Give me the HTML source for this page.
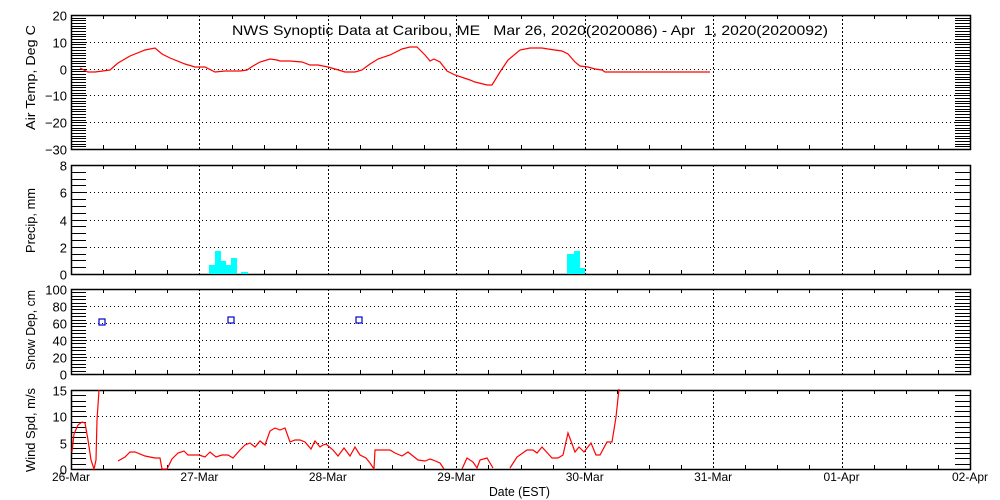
<!DOCTYPE html>
<html><head><meta charset="utf-8"><style>
html,body{margin:0;padding:0;background:#fff;}
svg{display:block;font-family:"Liberation Sans",sans-serif;}
text{font-size:12px;fill:#000;white-space:pre;}
</style></head><body>
<svg id="s" width="1000" height="500" viewBox="0 0 1000 500" xmlns="http://www.w3.org/2000/svg" xml:space="preserve">
<rect width="1000" height="500" fill="#fff"/>
<g id="g"></g>
<text x="232" y="35" textLength="596" lengthAdjust="spacingAndGlyphs" style="font-size:14px">NWS Synoptic Data at Caribou, ME   Mar 26, 2020(2020086) - Apr  1, 2020(2020092)</text>
<text x="489" y="496" textLength="61" lengthAdjust="spacingAndGlyphs" style="font-size:13px">Date (EST)</text>
<text transform="translate(35,130) rotate(-90)" textLength="105" lengthAdjust="spacingAndGlyphs" style="font-size:13px">Air Temp, Deg C</text>
<text transform="translate(35,253) rotate(-90)" textLength="65" lengthAdjust="spacingAndGlyphs" style="font-size:13px">Precip, mm</text>
<text transform="translate(35,370) rotate(-90)" textLength="80" lengthAdjust="spacingAndGlyphs" style="font-size:13px">Snow Dep, cm</text>
<text transform="translate(35,472) rotate(-90)" textLength="84" lengthAdjust="spacingAndGlyphs" style="font-size:13px">Wind Spd, m/s</text>
<polyline fill="none" stroke="#f00" stroke-width="1.2" points="80,68 88,72 95,72 110,70 118,63 130,56 145,50 155,48 162,54 170,58 185,64 195,67 205,67 215,72 225,71 240,71 247,70 253,66 260,62 270,59 277,60 280,61 290,61 302,62 310,65 318,65 328,67 335,69 345,72 355,72 362,70 370,64 378,59 390,55 402,49 410,47 417,47 425,55 430,61 434,59 440,62 447,71 455,75 470,80 475,82 487,85 492,85 500,72 508,60 520,50 530,48 542,48 548,49 555,50 562,51 568,54 575,62 580,66 588,67 595,69 602,70 605,72 710,72"/>
<g fill="#00ffff">
<rect x="209" y="265" width="6" height="9"/><rect x="215" y="251" width="6" height="23"/><rect x="221" y="261" width="5" height="13"/><rect x="226" y="265" width="5" height="9"/><rect x="231" y="258" width="6" height="16"/><rect x="241" y="272" width="7" height="2"/>
<rect x="567" y="254" width="7" height="20"/><rect x="574" y="251" width="6" height="23"/><rect x="580" y="268" width="5" height="6"/>
</g>
<g fill="none" stroke="#0000cc" stroke-width="1.2">
<rect x="99" y="319" width="6" height="6"/><rect x="228" y="317" width="6" height="6"/><rect x="356" y="317" width="6" height="6"/>
</g>
<g fill="none" stroke="#f00" stroke-width="1.2">
<polyline points="72,452 74,434 78,425 82,422 85,423 88,440 91,460 94,469 96,460 97,420 99,390"/>
<polyline points="118,461 125,457 130,452 135,452 145,456 155,458 160,458 162,469 167,469 172,459 178,453 184,451 188,455 199,455 205,457 210,452 216,457 222,455 228,455 233,458 240,450 245,445 250,443 255,447 260,441 265,445 270,431 275,428 280,430 285,428 290,442 295,440 300,440 305,442 311,449 315,441 320,447 323,445 326,444 333,450 338,456 344,448 350,456 355,447 360,455 366,458 370,463 374,469 375,450 390,450 395,453 402,456 408,452 413,456 418,460 425,461 430,459 433,460 440,463 444,469"/>
<polyline points="462,469 467,458 473,462 477,468 480,460 487,458 493,468"/>
<polyline points="510,468 517,457 527,450 533,450 537,453 542,447 552,458 558,458 563,455 568,433 575,452 579,447 584,452 591,443 596,455 600,455 607,442 612,442 616,417 619,389"/>
</g>
</svg>
<script>
var g=document.getElementById('g'),NS='http://www.w3.org/2000/svg';
function el(t,a,txt){var e=document.createElementNS(NS,t);for(var k in a)e.setAttribute(k,a[k]);if(txt!=null)e.textContent=txt;g.appendChild(e);return e;}
function ln(x1,y1,x2,y2,d){var a={x1:x1,y1:y1,x2:x2,y2:y2,stroke:'#000','stroke-width':1};if(d)a['stroke-dasharray']=d;el('line',a);}
var L=71,R=970,dw=(R-L)/7;
var P=[[15,149,-30,20,10,1],[165,274,0,8,2,0.5],[289,374,0,100,20,4],[390,469,0,15,5,1]];
P.forEach(function(p,pi){
 var t=p[0],b=p[1],mn=p[2],mx=p[3],mj=p[4],mi=p[5];
 function Y(v){return b-(v-mn)*(b-t)/(mx-mn);}
 for(var v=mn;v<=mx+1e-6;v+=mi){var y=Math.round(Y(v))+0.5;ln(L,y,L+15,y);ln(R-15,y,R,y);}
 for(var v=mn;v<=mx+1e-6;v+=mj){var y=Math.round(Y(v))+0.5;
  if(v>mn&&v<mx)ln(L+15,y,R-15,y,'1,3');
  el('text',{x:67,y:y+5,'text-anchor':'end',style:'font-size:13px'},String(v).replace('-','\u2212'));}
 for(var d=1;d<7;d++){var x=Math.round(L+d*dw)+0.5;ln(x,t,x,b,'2,2');}
 for(var q=1;q<28;q++){if(q%4==0)continue;var x=Math.round(L+q*dw/4)+0.5;ln(x,t,x,t+4);ln(x,b-4,x,b);}
 el('rect',{x:L+0.5,y:t+0.5,width:R-L,height:b-t,fill:'none',stroke:'#000','stroke-width':1.5});
});
var lab=['26-Mar','27-Mar','28-Mar','29-Mar','30-Mar','31-Mar','01-Apr','02-Apr'];
lab.forEach(function(s,i){el('text',{x:L+i*dw,y:481,'text-anchor':'middle'},s);});
</script>
</body></html>
